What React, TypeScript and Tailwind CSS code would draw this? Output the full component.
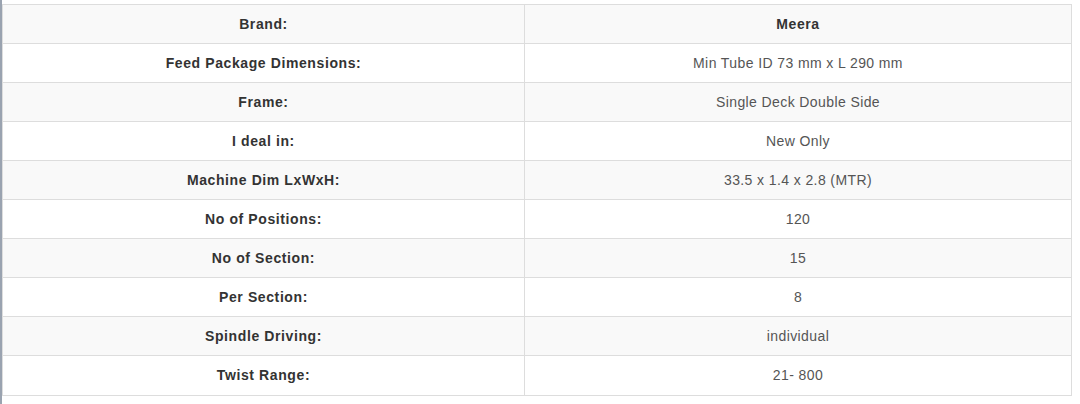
const rows: [string, string][] = [
  ["Brand:", "Meera"],
  ["Feed Package Dimensions:", "Min Tube ID 73 mm x L 290 mm"],
  ["Frame:", "Single Deck Double Side"],
  ["I deal in:", "New Only"],
  ["Machine Dim LxWxH:", "33.5 x 1.4 x 2.8 (MTR)"],
  ["No of Positions:", "120"],
  ["No of Section:", "15"],
  ["Per Section:", "8"],
  ["Spindle Driving:", "individual"],
  ["Twist Range:", "21- 800"],
];

export default function App() {
  return (
    <div className="flex h-[404px] w-[1080px] bg-white font-['Liberation_Sans',Arial,sans-serif] text-[14px] text-[#333]">
      <div className="w-[2px] shrink-0 bg-[#9aa3b0]" />
      <div className="pt-[4px]">
        <div className="w-[1070px] border border-[#dddddd]">
          {rows.map(([label, value], i) => (
            <div
              key={label}
              className={`grid h-[39px] grid-cols-[522px_1fr] ${i < rows.length - 1 ? "border-b border-[#dddddd]" : ""} ${i % 2 === 0 ? "bg-[#f9f9f9]" : "bg-white"}`}
            >
              <div className="flex items-center justify-center border-r border-[#dddddd] font-bold tracking-[0.6px]">
                {label}
              </div>
              <div className={`flex items-center justify-center ${i === 0 ? "font-bold tracking-[0.6px]" : "tracking-[0.4px] text-[#555]"}`}>
                {value}
              </div>
            </div>
          ))}
        </div>
      </div>
    </div>
  );
}
